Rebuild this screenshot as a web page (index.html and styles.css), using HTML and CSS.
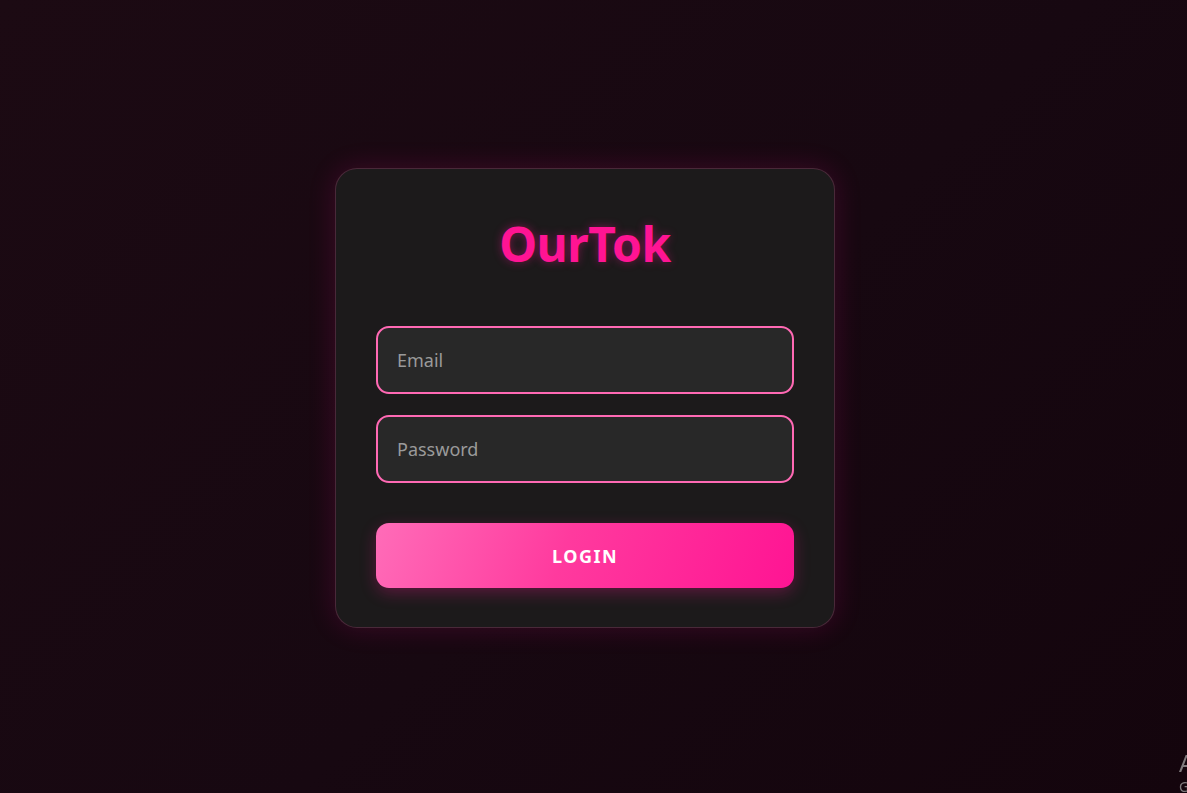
FILE: index.html
```html
<!DOCTYPE html>
<html lang="en">
<head>
<meta charset="utf-8">
<title>OurTok</title>
<link rel="stylesheet" href="styles.css">
</head>
<body>
<main class="page">
  <form class="card">
    <h1 class="brand">OurTok</h1>
    <div class="fields">
      <input class="field" type="email" placeholder="Email">
      <input class="field" type="password" placeholder="Password">
    </div>
    <button class="login" type="button">LOGIN</button>
  </form>
</main>
<div class="watermark">
  <div class="wm-title">Activate Windows</div>
  <div class="wm-sub">Go to Settings to activate Windows.</div>
</div>
</body>
</html>
```
FILE: styles.css
```css
* { box-sizing: border-box; }
html, body { margin: 0; height: 100%; }
body {
  background: linear-gradient(135deg, #1c0a13 0%, #170811 55%, #14050d 100%);
  font-family: "Noto Sans", "Open Sans", sans-serif;
  overflow: hidden;
}
.page {
  min-height: 100vh;
  display: flex;
  align-items: center;
  justify-content: center;
  padding: 3px 17px 0 0;
}
.card {
  width: 500px;
  background: #1c1a1b;
  border: 1px solid rgba(255, 105, 180, 0.2);
  border-radius: 22px;
  padding: 40px 40px 39px;
  box-shadow: 0 0 28px rgba(255, 20, 147, 0.16);
  display: flex;
  flex-direction: column;
}
.brand {
  margin: 3px 0 50px;
  text-align: center;
  color: #ff1493;
  font-size: 48px;
  font-weight: 700;
  line-height: 64px;
  letter-spacing: -0.5px;
  text-shadow: 0 0 10px rgba(255, 20, 147, 0.4);
}
.fields {
  display: flex;
  flex-direction: column;
  gap: 21px;
}
.field {
  width: 100%;
  height: 68px;
  border: 2px solid #ff69b4;
  border-radius: 13px;
  background: #282828;
  padding: 0 19px;
  font-family: inherit;
  font-size: 18px;
  color: #ddd;
  outline: none;
}
.field::placeholder { color: #9a9a9a; }
.login {
  margin-top: 40px;
  height: 65px;
  border: none;
  border-radius: 13px;
  background: linear-gradient(110deg, #ff6cb8 0%, #ff3a9e 45%, #ff1493 100%);
  color: #fff;
  font-family: inherit;
  font-size: 18px;
  font-weight: 700;
  letter-spacing: 1.5px;
  box-shadow: 0 5px 16px rgba(255, 20, 147, 0.28);
}
.watermark {
  position: fixed;
  left: 1179px;
  top: 748px;
  color: rgba(200, 200, 200, 0.6);
  white-space: nowrap;
  font-family: "Noto Sans", sans-serif;
}
.wm-title { font-size: 24px; line-height: 30px; }
.wm-sub { font-size: 14px; line-height: 18px; }
```
